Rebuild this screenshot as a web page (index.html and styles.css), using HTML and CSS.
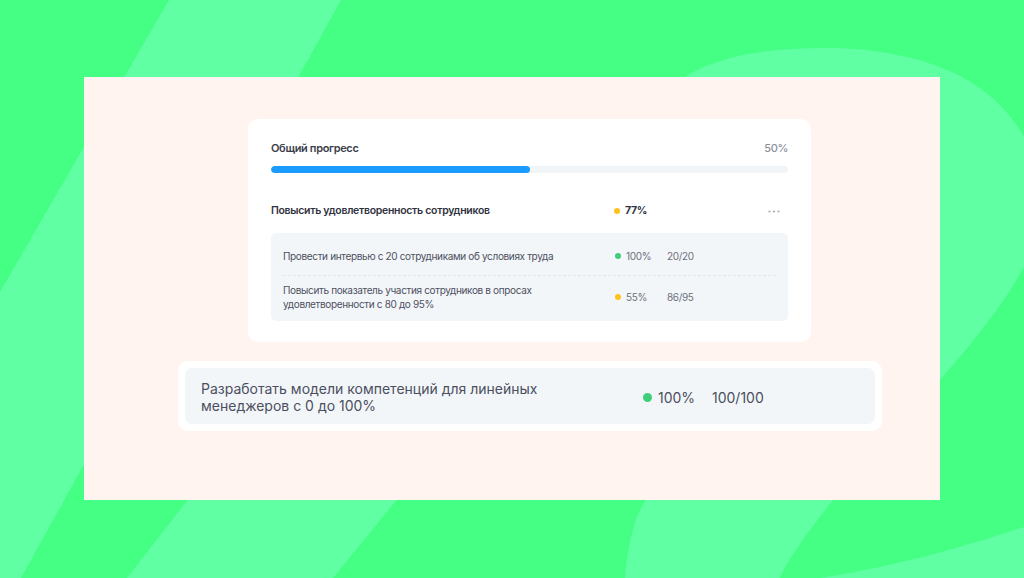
FILE: index.html
```html
<!DOCTYPE html>
<html lang="ru">
<head>
    <meta charset="UTF-8">
    <title>Цели и прогресс</title>
    <link rel="stylesheet" href="styles.css">
</head>
<body>
    <svg class="backdrop" viewBox="0 0 1024 578" width="1024" height="578" aria-hidden="true">
        <path d="M169 0 L341 0 L21 578 L0 578 L0 292 Z"/>
        <path d="M211 470 L421 470 L333 578 L127 578 Z"/>
        <path d="M625 578 C628 540 636 515 645 501 C670 400 630 140 685 77 C720 55 770 48 825 48 C880 48 925 58 962 77 C990 92 1010 112 1024 137 C1045 175 1045 235 1024 267 C1000 310 970 345 940 380 C900 425 860 460 832 501 C810 530 790 555 780 578 Z"/>
        <path d="M1024 527 C960 548 900 565 820 578 L1024 578 Z"/>
    </svg>

    <main class="panel">
        <section class="card progress-card">
            <div class="summary">
                <span class="summary-title">Общий прогресс</span>
                <span class="summary-value">50%</span>
            </div>
            <div class="bar"><div class="bar-fill" style="width:50%"></div></div>

            <div class="goal">
                <span class="goal-title">Повысить удовлетворенность сотрудников</span>
                <span class="status"><i class="dot yellow"></i><b>77%</b></span>
                <span class="more">
                    <svg width="12" height="3" viewBox="0 0 12 3"><circle cx="1.5" cy="1.5" r="1.1"/><circle cx="6" cy="1.5" r="1.1"/><circle cx="10.5" cy="1.5" r="1.1"/></svg>
                </span>
            </div>

            <div class="subgoals">
                <div class="subgoal first">
                    <span class="subgoal-title">Провести интервью с 20 сотрудниками об условиях труда</span>
                    <span class="status"><i class="dot green"></i>100%</span>
                    <span class="count">20/20</span>
                </div>
                <div class="subgoal last">
                    <span class="subgoal-title">Повысить показатель участия сотрудников в опросах удовлетворенности с 80 до 95%</span>
                    <span class="status"><i class="dot yellow"></i>55%</span>
                    <span class="count">86/95</span>
                </div>
            </div>
        </section>

        <section class="card highlight">
            <div class="highlight-row">
                <span class="highlight-title">Разработать модели компетенций для линейных менеджеров с 0 до 100%</span>
                <span class="status"><i class="dot green big"></i>100%</span>
                <span class="count">100/100</span>
            </div>
        </section>
    </main>
</body>
</html>
```

FILE: styles.css
```css
body { margin: 0; padding-top: 77px; height: 501px; overflow: hidden; position: relative; background: #45ff85; font-family: Inter, "Noto Sans", sans-serif; }
.backdrop { position: absolute; top: 0; left: 0; z-index: 0; }
.backdrop path { fill: #60ffa3; }

.panel { position: relative; z-index: 1; margin-left: 84px; width: 856px; height: 423px; padding-top: 42px; box-sizing: border-box; background: #fff4ef; }

.card { background: #fff; border-radius: 10px; box-sizing: border-box; }
.progress-card { margin-left: 164px; width: 563px; padding: 21px 23px 21px; }

.summary { display: flex; justify-content: space-between; font-size: 11px; line-height: 16px; letter-spacing: -0.35px; }
.summary-title { font-weight: 600; color: #3b3e4c; }
.summary-value { font-weight: 500; color: #8e909a; }

.bar { margin-top: 10px; height: 7px; border-radius: 4px; background: #f2f5f8; overflow: hidden; }
.bar-fill { height: 100%; border-radius: 4px; background: #1b9cfc; }

.goal { display: flex; align-items: center; margin-top: 30px; font-size: 10.5px; line-height: 16px; letter-spacing: -0.3px; }
.goal-title { width: 343px; font-weight: 600; color: #2f3240; }
.goal b { font-weight: 700; color: #2f3240; }
.more { margin-left: auto; margin-right: 8px; display: flex; }
.more svg { fill: #a9abb4; }

.status { display: flex; align-items: center; gap: 5px; }
.dot { display: inline-block; width: 6px; height: 6px; border-radius: 50%; }
.dot.big { width: 9px; height: 9px; }
.yellow { background: #ffc21a; }
.green { background: #3fcf7a; }

.subgoals { margin-top: 14px; padding: 0 12px; border-radius: 5px; background: #f3f6f9; }
.subgoal { display: flex; align-items: center; font-size: 10px; line-height: 14px; letter-spacing: -0.35px; color: #4d5060; }
.subgoal.first { padding: 16px 0 12px; border-bottom: 1px dashed #e2e6ec; }
.subgoal.last { padding: 7px 0 10px; }
.subgoal-title { width: 300px; margin-right: 32px; }
.subgoal .status { width: 52px; color: #6d707d; }
.subgoal .count { color: #6d707d; }

.highlight { margin: 19px 0 0 94px; width: 704px; padding: 7px; }
.highlight-row { display: flex; align-items: center; padding: 12px 16px 10px; border-radius: 7px; background: #f3f6f9; font-size: 14px; line-height: 17px; color: #4b4f5e; }
.highlight-title { width: 360px; margin-right: 82px; }
.highlight .status { width: 69px; gap: 6px; }
```
